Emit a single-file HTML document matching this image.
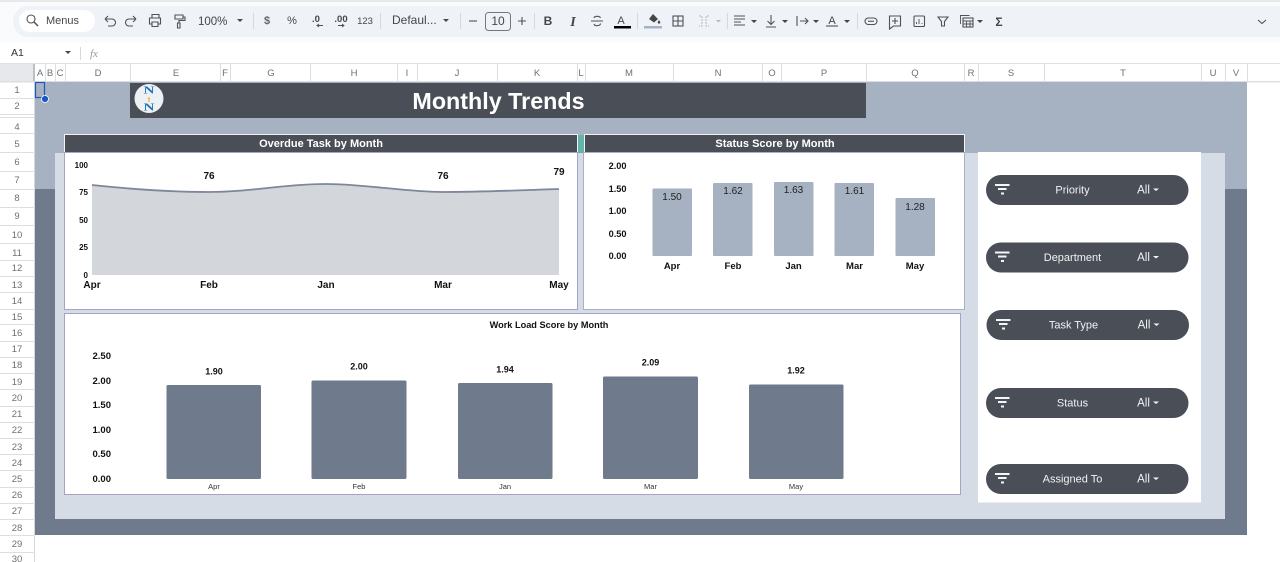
<!DOCTYPE html>
<html><head><meta charset="utf-8"><title>Monthly Trends</title>
<style>
html,body{margin:0;padding:0;background:#fff;width:1280px;height:562px;overflow:hidden}
svg{display:block}
text{font-family:"Liberation Sans",sans-serif}
.ic{fill:none;stroke:#4f5254}
.hd{font-size:9.5px;fill:#707070;text-anchor:middle}
.rn{font-size:9.5px;fill:#707070;text-anchor:middle}
.tb{font-size:11px;fill:#444746}
.c{fill:#444746}
.b{font-weight:bold;fill:#111}
.m{text-anchor:middle}
.e{text-anchor:end}
.fl{font-size:11px;fill:#f1f2f4;text-anchor:middle}
.al{font-size:11.5px;fill:#f1f2f4;text-anchor:middle}
</style></head><body>
<svg width="1280" height="562" viewBox="0 0 1280 562" xmlns="http://www.w3.org/2000/svg">
<rect width="1280" height="562" fill="#fff"/>
<!-- toolbar -->
<rect width="1280" height="43" fill="#f9fbfd"/>
<rect width="1280" height="2" fill="#e6e8ea"/>
<rect x="13" y="6" width="1290" height="31" rx="15" fill="#eff3f8"/>
<rect x="19" y="10" width="76" height="22" rx="11" fill="#fff"/>
<g stroke-width="1.1">
<circle cx="31" cy="19" r="4" class="ic"/><path d="M34 22l4 4" class="ic" stroke-width="1.5"/>
<text x="46" y="24" class="tb">Menus</text>
<path class="ic" d="M105 19h7a3.5 3.5 0 0 1 0 7h-4M105 19l3-3M105 19l3 3"/>
<path class="ic" d="M136 19h-7a3.5 3.5 0 0 0 0 7h4M136 19l-3-3M136 19l-3 3"/>
<path class="ic" d="M152 18v-3.5h7V18M152 24h-2.5v-6h11v6H158M152 22h6v4.500h-6z"/>
<path class="ic" d="M175 15h8v4h-8zM183 17h2v3.500h-6v2.500M177.500 23h2.500v5h-2.500z"/>
<text x="198" y="25" class="tb" style="font-size:11.500px">100%</text>
<path class="c" d="M237 19h6l-3 3z"/>
<rect x="253" y="13" width="1" height="16" fill="#d5d8dc"/>
<text x="267" y="24" class="tb m" style="font-size:11px;font-weight:bold;fill:#666">$</text>
<text x="292" y="24" class="tb m" style="font-size:11px">%</text>
<text x="316" y="22" class="tb m" style="font-size:9.500px;font-weight:bold">.0</text><path class="ic" d="M323 25.500h-6M319 24l-2 1.500 2 1.500" stroke-width=".9"/>
<text x="341" y="22" class="tb m" style="font-size:9.500px;font-weight:bold">.00</text><path class="ic" d="M338 25.500h6M342 24l2 1.500-2 1.500" stroke-width=".9"/>
<text x="365" y="24" class="tb m" style="font-size:9.5px">123</text>
<rect x="380" y="13" width="1" height="16" fill="#d5d8dc"/>
<text x="392" y="24" class="tb" style="font-size:12px">Defaul...</text>
<path class="c" d="M443 19h6l-3 3z"/>
<rect x="460" y="13" width="1" height="16" fill="#d5d8dc"/>
<path class="ic" d="M469 21h8"/>
<rect x="485.500" y="12.500" width="25" height="18" rx="3" fill="none" stroke="#777" stroke-width="1"/>
<text x="498" y="25" class="tb m" style="font-size:12px">10</text>
<path class="ic" d="M518 21h8M522 17v8"/>
<rect x="534" y="13" width="1" height="16" fill="#d5d8dc"/>
<text x="548" y="25" class="tb m" style="font-size:12px;font-weight:bold">B</text>
<text x="573" y="26" class="tb m" style="font-size:14px;font-style:italic;font-weight:bold;font-family:'Liberation Serif',serif">I</text>
<path class="ic" d="M591 21h12M600.500 18c-.5-2-6-2.500-6.500 0M594 24c.5 2.500 6.500 2 6.500-.5"/>
<text x="621" y="24" class="tb m" style="font-size:11px">A</text><rect x="614" y="26" width="17" height="2.500" fill="#000"/>
<rect x="637" y="13" width="1" height="16" fill="#d5d8dc"/>
<path class="c" d="M653 14l5 5-4 3.500-5-3.500zM659 20l1.500 2.500-1.500 1.500-1.500-1.500z"/>
<rect x="644" y="26" width="18" height="2.500" fill="#a5b3c9"/>
<rect x="673" y="16" width="10" height="10" class="ic"/><path class="ic" d="M678 16v10M673 21h10"/>
<path fill="none" stroke="#b6b9bd" stroke-width="1" stroke-dasharray="2 1" d="M699 16h3v10h-3M709 16h-3v10h3"/><path d="M716 20h5l-2.500 2.500z" fill="#b6b9bd"/>
<rect x="727" y="13" width="1" height="16" fill="#d5d8dc"/>
<path class="ic" d="M734 16h11M734 19h11M734 22h7M734 25h11"/><path class="c" d="M751 20h6l-3 3z"/>
<path class="ic" d="M771 15v9M767.500 21l3.500 3.500 3.500-3.500M766 27h10"/><path class="c" d="M782 20h6l-3 3z"/>
<path class="ic" d="M797 16v10M800 21h8M805 18l3 3-3 3"/><path class="c" d="M813 20h6l-3 3z"/>
<text x="832" y="24" class="tb m" style="font-size:11px">A</text><path class="ic" d="M826 26h12"/><path class="c" d="M844 20h6l-3 3z"/>
<rect x="857" y="13" width="1" height="16" fill="#d5d8dc"/>
<rect x="865" y="18" width="12" height="6.500" rx="3.250" class="ic"/><path class="ic" d="M868 21.250h6"/>
<path class="ic" d="M889.500 16h11v10h-7l-4 3zM895 18v6M892 21h6"/>
<rect x="914" y="16" width="10.500" height="10.500" rx="1" class="ic"/><path class="ic" d="M916.500 24v-2M919 24v-5M922 24v-1" stroke-width=".9"/>
<path class="ic" d="M938 17h10l-3.500 4.500V26h-3v-4.500z"/>
<rect x="963" y="18" width="10" height="9" class="ic"/><path class="ic" d="M963 21h10M963 24h10M966.500 21v6M970 21v6M960.500 24V15.500h9" stroke-width=".9"/><path class="c" d="M977 20h6l-3 3z"/>
<text x="999" y="26" class="tb m" style="font-size:12px;font-weight:bold">Σ</text>
<path class="ic" d="M1258 20l4 3.500 4-3.500"/>
</g>
<!-- formula bar -->
<text x="11" y="56" style="font-size:10.500px" fill="#333">A1</text>
<path class="c" d="M65 51h6l-3 3z"/>
<rect x="80" y="47" width="1" height="13" fill="#d5d8dc"/>
<text x="90" y="57" style="font-size:11px;font-style:italic;font-family:'Liberation Serif',serif" fill="#999">fx</text>
<!-- column header -->
<rect x="0" y="63" width="1280" height="1" fill="#dfe1e4"/>
<rect x="0" y="64" width="35" height="18" fill="#e6e8eb"/>
<rect x="33" y="64" width="2" height="18" fill="#bdc1c6"/>
<rect x="0" y="81" width="1280" height="1.500" fill="#dcdfe2"/>
<g fill="#dcdfe2">
<rect x="45" y="64" width="1" height="18"/><rect x="55" y="64" width="1" height="18"/><rect x="65" y="64" width="1" height="18"/><rect x="130" y="64" width="1" height="18"/><rect x="220" y="64" width="1" height="18"/><rect x="230" y="64" width="1" height="18"/><rect x="310" y="64" width="1" height="18"/><rect x="397" y="64" width="1" height="18"/><rect x="417" y="64" width="1" height="18"/><rect x="497" y="64" width="1" height="18"/><rect x="577" y="64" width="1" height="18"/><rect x="585" y="64" width="1" height="18"/><rect x="673" y="64" width="1" height="18"/><rect x="762" y="64" width="1" height="18"/><rect x="781" y="64" width="1" height="18"/><rect x="866" y="64" width="1" height="18"/><rect x="964" y="64" width="1" height="18"/><rect x="978" y="64" width="1" height="18"/><rect x="1044" y="64" width="1" height="18"/><rect x="1201" y="64" width="1" height="18"/><rect x="1225" y="64" width="1" height="18"/><rect x="1247" y="64" width="1" height="18"/>
</g>
<g>
<text class="hd" x="40" y="76">A</text><text class="hd" x="50" y="76">B</text><text class="hd" x="60" y="76">C</text><text class="hd" x="98" y="76">D</text><text class="hd" x="176" y="76">E</text><text class="hd" x="225" y="76">F</text><text class="hd" x="271" y="76">G</text><text class="hd" x="354" y="76">H</text><text class="hd" x="407" y="76">I</text><text class="hd" x="457" y="76">J</text><text class="hd" x="537" y="76">K</text><text class="hd" x="581" y="76">L</text><text class="hd" x="629" y="76">M</text><text class="hd" x="718" y="76">N</text><text class="hd" x="772" y="76">O</text><text class="hd" x="824" y="76">P</text><text class="hd" x="915" y="76">Q</text><text class="hd" x="971" y="76">R</text><text class="hd" x="1011" y="76">S</text><text class="hd" x="1123" y="76">T</text><text class="hd" x="1213" y="76">U</text><text class="hd" x="1236" y="76">V</text>
</g>
<!-- row header -->
<rect x="34" y="82" width="1" height="480" fill="#d5d7da"/>
<g fill="#dcdfe2">
<rect y="98" width="35" height="1"/><rect y="114" width="35" height="1"/><rect y="117" width="35" height="1"/><rect y="133" width="35" height="1"/><rect y="152" width="35" height="1"/><rect y="171" width="35" height="1"/><rect y="189" width="35" height="1"/><rect y="207" width="35" height="1"/><rect y="225" width="35" height="1"/><rect y="243" width="35" height="1"/><rect y="260" width="35" height="1"/><rect y="276" width="35" height="1"/><rect y="292" width="35" height="1"/><rect y="309" width="35" height="1"/><rect y="324" width="35" height="1"/><rect y="341" width="35" height="1"/><rect y="357" width="35" height="1"/><rect y="373" width="35" height="1"/><rect y="389" width="35" height="1"/><rect y="406" width="35" height="1"/><rect y="422" width="35" height="1"/><rect y="438" width="35" height="1"/><rect y="454" width="35" height="1"/><rect y="470" width="35" height="1"/><rect y="487" width="35" height="1"/><rect y="503" width="35" height="1"/><rect y="519" width="35" height="1"/><rect y="535" width="35" height="1"/><rect y="552" width="35" height="1"/>
</g>
<g>
<text class="rn" x="17" y="93">1</text><text class="rn" x="17" y="109">2</text><text class="rn" x="17" y="130">4</text><text class="rn" x="17" y="147">5</text><text class="rn" x="17" y="165">6</text><text class="rn" x="17" y="183">7</text><text class="rn" x="17" y="201">8</text><text class="rn" x="17" y="219">9</text><text class="rn" x="17" y="238">10</text><text class="rn" x="17" y="256">11</text><text class="rn" x="17" y="271">12</text><text class="rn" x="17" y="288">13</text><text class="rn" x="17" y="304">14</text><text class="rn" x="17" y="320">15</text><text class="rn" x="17" y="336">16</text><text class="rn" x="17" y="352">17</text><text class="rn" x="17" y="368">18</text><text class="rn" x="17" y="385">19</text><text class="rn" x="17" y="401">20</text><text class="rn" x="17" y="417">21</text><text class="rn" x="17" y="433">22</text><text class="rn" x="17" y="450">23</text><text class="rn" x="17" y="466">24</text><text class="rn" x="17" y="482">25</text><text class="rn" x="17" y="498">26</text><text class="rn" x="17" y="514">27</text><text class="rn" x="17" y="531">28</text><text class="rn" x="17" y="547">29</text><text class="rn" x="17" y="562">30</text>
</g>
<!-- sheet backdrop -->
<rect x="35" y="82" width="1212" height="107" fill="#a6b1c1"/>
<rect x="35" y="189" width="1212" height="346" fill="#6f7a8c"/>
<rect x="55" y="153" width="1170" height="366" fill="#d6dce5"/>
<!-- selection -->
<rect x="35.500" y="82.500" width="9" height="15" fill="none" stroke="#1a56c4" stroke-width="1.200"/>
<circle cx="45" cy="99" r="3.500" fill="#1a56c4" stroke="#fff" stroke-width=".8"/>
<!-- title banner -->
<rect x="130" y="83" width="736" height="35" fill="#4a4e57"/>
<circle cx="149" cy="98.500" r="14.500" fill="#eef1f3"/>
<text x="149" y="93.500" class="m" textLength="11" lengthAdjust="spacingAndGlyphs" style="font-size:10.500px;font-weight:bold;font-family:'Liberation Serif',serif" fill="#1c75bc">N</text>
<text x="149" y="102" class="m" style="font-size:7.500px;font-weight:bold" fill="#f2a93b">t</text>
<text x="149" y="110.500" class="m" textLength="11" lengthAdjust="spacingAndGlyphs" style="font-size:10.500px;font-weight:bold;font-family:'Liberation Serif',serif" fill="#1c75bc">N</text>
<text x="498.500" y="109" class="m" style="font-size:23.300px;font-weight:bold" fill="#fff">Monthly Trends</text>
<!-- section headers -->
<rect x="64.500" y="134.500" width="513" height="18" fill="#4a4e57" stroke="#f2f3f5" stroke-width="1"/>
<text x="321" y="147" class="m" style="font-size:11px;font-weight:bold" fill="#fff">Overdue Task by Month</text>
<rect x="578" y="135" width="6" height="18" fill="#63b5ac"/>
<rect x="584.500" y="134.500" width="380" height="18" fill="#4a4e57" stroke="#f2f3f5" stroke-width="1"/>
<text x="775" y="147" class="m" style="font-size:11px;font-weight:bold" fill="#fff">Status Score by Month</text>
<!-- panel 1 -->
<rect x="64.500" y="152.500" width="513" height="157" fill="#fff" stroke="#a5a5c3" stroke-width="1"/>
<path d="M92 185C130 189 170 192 209 192C250 192 285 184 326 184C365 184 405 192 443 192C485 192 525 190 559 189V275H92Z" fill="#d3d6db"/>
<path d="M92 185C130 189 170 192 209 192C250 192 285 184 326 184C365 184 405 192 443 192C485 192 525 190 559 189" fill="none" stroke="#7d8799" stroke-width="1.800"/>
<g>
<text class="b e" x="88" y="168" style="font-size:8px">100</text><text class="b e" x="88" y="195" style="font-size:8px">75</text><text class="b e" x="88" y="223" style="font-size:8px">50</text><text class="b e" x="88" y="250" style="font-size:8px">25</text><text class="b e" x="88" y="278" style="font-size:8px">0</text>
</g>
<text class="b m" x="92" y="288" style="font-size:10px">Apr</text><text class="b m" x="209" y="288" style="font-size:10px">Feb</text><text class="b m" x="326" y="288" style="font-size:10px">Jan</text><text class="b m" x="443" y="288" style="font-size:10px">Mar</text><text class="b m" x="559" y="288" style="font-size:10px">May</text>
<text class="b m" x="209" y="179" style="font-size:10px">76</text><text class="b m" x="443" y="179" style="font-size:10px">76</text><text class="b m" x="559" y="175" style="font-size:10px">79</text>
<!-- panel 2 -->
<rect x="583.500" y="152.500" width="381" height="157" fill="#fff" stroke="#a9b0c4" stroke-width="1"/>
<g fill="#a6b1c1">
<rect x="652.500" y="188.500" width="39.500" height="67.500" rx="1"/><rect x="713" y="183" width="39.500" height="73" rx="1"/><rect x="774" y="182" width="39.500" height="74" rx="1"/><rect x="834.500" y="183" width="39.500" height="73" rx="1"/><rect x="895.500" y="198" width="39.500" height="58" rx="1"/>
</g>
<g>
<text class="b e" x="626.500" y="169" style="font-size:9.200px">2.00</text><text class="b e" x="626.500" y="192" style="font-size:9.200px">1.50</text><text class="b e" x="626.500" y="214" style="font-size:9.200px">1.00</text><text class="b e" x="626.500" y="237" style="font-size:9.200px">0.50</text><text class="b e" x="626.500" y="259" style="font-size:9.200px">0.00</text>
</g>
<g>
<text class="m" x="672" y="200" style="font-size:10px" fill="#222">1.50</text><text class="m" x="733" y="194" style="font-size:10px" fill="#222">1.62</text><text class="m" x="793.500" y="193" style="font-size:10px" fill="#222">1.63</text><text class="m" x="854.500" y="194" style="font-size:10px" fill="#222">1.61</text><text class="m" x="915" y="210" style="font-size:10px" fill="#222">1.28</text>
</g>
<text class="b m" x="672" y="269" style="font-size:9.500px">Apr</text><text class="b m" x="733" y="269" style="font-size:9.500px">Feb</text><text class="b m" x="793.500" y="269" style="font-size:9.500px">Jan</text><text class="b m" x="854.500" y="269" style="font-size:9.500px">Mar</text><text class="b m" x="915" y="269" style="font-size:9.500px">May</text>
<!-- panel 3 -->
<rect x="64.500" y="313.500" width="896" height="181" fill="#fff" stroke="#a5a5c3" stroke-width="1"/>
<text class="b m" x="549" y="328" style="font-size:9.200px">Work Load Score by Month</text>
<g fill="#6f7a8c">
<rect x="166.500" y="385" width="94.500" height="94" rx="1.500"/><rect x="311.500" y="380.500" width="95" height="98.500" rx="1.500"/><rect x="458" y="383" width="94.500" height="96" rx="1.500"/><rect x="603" y="376.500" width="95" height="102.500" rx="1.500"/><rect x="749" y="384.500" width="94.500" height="94.500" rx="1.500"/>
</g>
<g>
<text class="b e" x="111" y="359" style="font-size:9.500px">2.50</text><text class="b e" x="111" y="384" style="font-size:9.500px">2.00</text><text class="b e" x="111" y="408" style="font-size:9.500px">1.50</text><text class="b e" x="111" y="433" style="font-size:9.500px">1.00</text><text class="b e" x="111" y="457" style="font-size:9.500px">0.50</text><text class="b e" x="111" y="482" style="font-size:9.500px">0.00</text>
</g>
<text class="b m" x="214" y="374.500" style="font-size:9px">1.90</text><text class="b m" x="359" y="369.500" style="font-size:9px">2.00</text><text class="b m" x="505" y="372.500" style="font-size:9px">1.94</text><text class="b m" x="650.500" y="365.500" style="font-size:9px">2.09</text><text class="b m" x="796" y="373.500" style="font-size:9px">1.92</text>
<g>
<text class="m" x="214" y="489" style="font-size:7.500px" fill="#333">Apr</text><text class="m" x="359" y="489" style="font-size:7.500px" fill="#333">Feb</text><text class="m" x="505" y="489" style="font-size:7.500px" fill="#333">Jan</text><text class="m" x="650.500" y="489" style="font-size:7.500px" fill="#333">Mar</text><text class="m" x="796" y="489" style="font-size:7.500px" fill="#333">May</text>
</g>
<!-- slicers -->
<rect x="978" y="152" width="223" height="350.500" fill="#fff"/>
<g fill="#4a4e57">
<rect x="986" y="175" width="202.500" height="30" rx="15"/><rect x="986" y="242.500" width="202.500" height="30" rx="15"/><rect x="986.500" y="310" width="202.500" height="30" rx="15"/><rect x="986" y="388" width="202.500" height="30" rx="15"/><rect x="986" y="464" width="202.500" height="30" rx="15"/>
</g>
<g fill="#f4f5f6">
<path d="M995 184h14.500v2h-14.500zM998 188h8.500v2h-8.500zM1001 192.500h3v2h-3z"/>
<path d="M995 251.500h14.500v2h-14.500zM998 255.500h8.500v2h-8.500zM1001 260h3v2h-3z"/>
<path d="M996 319h14.500v2h-14.500zM999 323h8.500v2h-8.500zM1002 327.500h3v2h-3z"/>
<path d="M995 397h14.500v2h-14.500zM998 401h8.500v2h-8.500zM1001 405.500h3v2h-3z"/>
<path d="M995 473h14.500v2h-14.500zM998 477h8.500v2h-8.500zM1001 481.500h3v2h-3z"/>
</g>
<text class="fl" x="1072.500" y="193.500">Priority</text><text class="fl" x="1072.500" y="261">Department</text><text class="fl" x="1073.500" y="328.500">Task Type</text><text class="fl" x="1072.500" y="406.500">Status</text><text class="fl" x="1072.500" y="482.500">Assigned To</text>
<g>
<text class="al" x="1143.500" y="193.500">All</text><text class="al" x="1143.500" y="261">All</text><text class="al" x="1144" y="328.500">All</text><text class="al" x="1143.500" y="406.500">All</text><text class="al" x="1143.500" y="482.500">All</text>
</g>
<g fill="#f4f5f6">
<path d="M1153 188.500h6l-3 2.500z"/><path d="M1153 256h6l-3 2.500z"/><path d="M1153.500 323.500h6l-3 2.500z"/><path d="M1153 401.500h6l-3 2.500z"/><path d="M1153 477.500h6l-3 2.500z"/>
</g>
</svg>
</body></html>
